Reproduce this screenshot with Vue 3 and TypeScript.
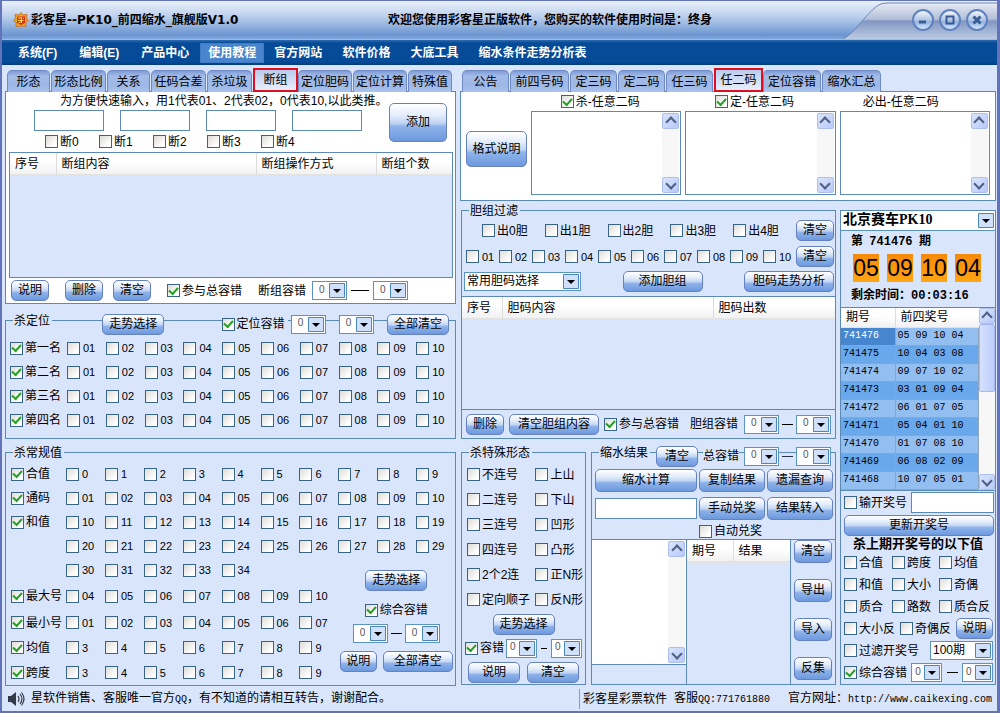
<script setup lang="ts">
import { ref } from 'vue'

interface Draw { issue: string; nums: string }
interface Row { head: string; vals: string[] }

const pad = (n: number): string => String(n).padStart(2, '0')
const range = (from: number, to: number, padded = false): string[] =>
  Array.from({ length: to - from + 1 }, (_, i) => (padded ? pad(from + i) : String(from + i)))

const menus = ['系统(F)', '编辑(E)', '产品中心', '使用教程', '官方网站', '软件价格', '大底工具', '缩水条件走势分析表']
const leftTabs = ['形态', '形态比例', '关系', '任码合差', '杀垃圾', '断组', '定位胆码', '定位计算', '特殊值']
const rightTabs = ['公告', '前四号码', '定三码', '定二码', '任三码', '任二码', '定位容错', '缩水汇总']
const leftTab = ref('断组')
const rightTab = ref('任二码')

const places = ['第一名', '第二名', '第三名', '第四名']
const tenNumbers = range(1, 10, true)

const normalRows: Row[] = [
  { head: '合值', vals: range(0, 9) },
  { head: '通码', vals: range(1, 10, true) },
  { head: '和值', vals: range(10, 19) },
  { head: '', vals: range(20, 29) },
  { head: '', vals: range(30, 34) },
  { head: '最大号', vals: range(4, 10, true) },
  { head: '最小号', vals: range(1, 7, true) },
  { head: '均值', vals: range(3, 9) },
  { head: '跨度', vals: range(3, 9) },
]

const memos = [
  { name: '杀-任意二码', box: true },
  { name: '定-任意二码', box: true },
  { name: '必出-任意二码', box: false },
]

const shapes = ['不连号', '上山', '二连号', '下山', '三连号', '凹形', '四连号', '凸形', '2个2连', '正N形', '定向顺子', '反N形']

const balls = ['05', '09', '10', '04']
const draws: Draw[] = [
  { issue: '741476', nums: '05 09 10 04' },
  { issue: '741475', nums: '10 04 03 08' },
  { issue: '741474', nums: '09 07 10 02' },
  { issue: '741473', nums: '03 01 09 04' },
  { issue: '741472', nums: '06 01 07 05' },
  { issue: '741471', nums: '05 04 01 10' },
  { issue: '741470', nums: '01 07 08 10' },
  { issue: '741469', nums: '06 08 02 09' },
  { issue: '741468', nums: '10 07 05 01' },
]
const lastKills = ['合值', '跨度', '均值', '和值', '大小', '奇偶', '质合', '路数', '质合反']
</script>

<template>
  <div class="window">
    <header class="title-bar">
      <svg class="logo" viewBox="0 0 16 16" aria-hidden="true">
        <path d="M8 .5l2 2.600 4-.8-.6 3.800 2.200 2.600-2.800 1.800.2 4-4-.6-1 .8-1-.8-4 .6.2-4L.4 8.700l2.200-2.600L2 2.300l4 .8z" fill="#f0a81c" stroke="#c8661a" stroke-width=".8" />
        <path d="M4 4.500h8v6.500l-4 2-4-2z" fill="#d8301c" />
        <path d="M5 6h3M5 8.500h5.500M8.500 5v6M5.500 11l3-1.500M10 6l1 1" stroke="#ffd84a" fill="none" />
      </svg>
      <h1>彩客星--PK10_前四缩水_旗舰版V1.0</h1>
      <p class="welcome">欢迎您使用彩客星正版软件，您购买的软件使用时间是：终身</p>
      <div class="controls">
        <svg class="wing" viewBox="0 0 154 38" preserveAspectRatio="none" aria-hidden="true">
          <defs>
            <linearGradient id="wing" x1="0" y1="0" x2="0" y2="1">
              <stop offset="0" stop-color="#e6ebf4" />
              <stop offset=".45" stop-color="#b3bfd8" />
              <stop offset=".5" stop-color="#8296c2" />
              <stop offset="1" stop-color="#bccbe4" />
            </linearGradient>
          </defs>
          <path d="M0 38C10 34 22 14 34 5Q38 2 44 2H154V38Z" fill="url(#wing)" />
          <path d="M0 38C10 34 22 14 34 5Q38 2 44 2H154" fill="none" stroke="#6f88b8" />
        </svg>
        <button class="round" aria-label="最小化">
          <svg viewBox="0 0 12 12"><path d="M2 8h7" stroke="#3a5c94" stroke-width="3" /></svg>
        </button>
        <button class="round" aria-label="最大化">
          <svg viewBox="0 0 12 12"><path d="M2.500 2.500h7v7h-7z" fill="none" stroke="#3a5c94" stroke-width="2" /></svg>
        </button>
        <button class="round" aria-label="关闭">
          <svg viewBox="0 0 12 12"><path d="M2.500 2.500l7 7M9.500 2.500l-7 7" stroke="#3a5c94" stroke-width="3" /></svg>
        </button>
      </div>
    </header>

    <nav class="menu-bar">
      <a v-for="m in menus" :key="m" href="#" :class="{ on: m === '使用教程' }">{{ m }}</a>
    </nav>

    <main class="work">
      <div class="left">
        <div class="tabs tabs-left">
          <button v-for="t in leftTabs" :key="t" :class="{ on: t === leftTab }" @click="leftTab = t">{{ t }}</button>
        </div>
        <section class="page break-page">
          <div class="quick">
            <div class="quick-main">
              <p>为方便快速输入，用1代表01、2代表02，0代表10,以此类推。</p>
              <div class="quick-inputs">
                <input v-for="n in 4" :key="n" type="text" class="field" :aria-label="'断组输入' + n">
              </div>
              <div class="quick-checks">
                <label v-for="n in range(0, 4)" :key="n" class="ck"><input type="checkbox">断{{ n }}</label>
              </div>
            </div>
            <button class="btn btn-add">添加</button>
          </div>
          <div class="list break-list">
            <table>
              <colgroup><col class="w46"><col><col class="w120"><col class="w76"></colgroup>
              <thead><tr><th>序号</th><th>断组内容</th><th>断组操作方式</th><th>断组个数</th></tr></thead>
            </table>
          </div>
          <div class="break-foot">
            <button class="btn">说明</button>
            <button class="btn">删除</button>
            <button class="btn">清空</button>
            <label class="ck"><input type="checkbox" checked>参与总容错</label>
            <div class="pair">
              <span class="pair-name">断组容错</span>
              <select aria-label="断组容错下限"><option>0</option><option>1</option></select>
              <i class="dash"></i>
              <select aria-label="断组容错上限"><option>0</option><option>1</option></select>
            </div>
          </div>
        </section>

        <section class="group place-group">
          <div class="head place-head">
            <h2>杀定位</h2>
            <button class="btn">走势选择</button>
            <label class="ck"><input type="checkbox" checked>定位容错</label>
            <select aria-label="定位容错下限"><option>0</option><option>1</option></select>
            <select aria-label="定位容错上限"><option>0</option><option>1</option></select>
            <button class="btn">全部清空</button>
          </div>
          <div class="numbers place-rows">
            <template v-for="p in places" :key="p">
              <label class="ck row-head"><input type="checkbox" checked>{{ p }}</label>
              <label v-for="n in tenNumbers" :key="p + n" class="ck num"><input type="checkbox">{{ n }}</label>
            </template>
          </div>
        </section>

        <section class="group normal-group">
          <div class="head"><h2>杀常规值</h2></div>
          <div class="numbers normal-rows">
            <template v-for="(r, i) in normalRows" :key="i">
              <label v-if="r.head" class="ck row-head"><input type="checkbox" checked>{{ r.head }}</label>
              <span v-else class="row-head"></span>
              <label v-for="n in r.vals" :key="n" class="ck num"><input type="checkbox">{{ n }}</label>
            </template>
            <div class="normal-side">
              <button class="btn trend">走势选择</button>
              <label class="ck"><input type="checkbox" checked>综合容错</label>
              <div class="pair">
                <select aria-label="综合容错下限"><option>0</option><option>1</option></select>
                <i class="dash short"></i>
                <select aria-label="综合容错上限"><option>0</option><option>1</option></select>
              </div>
              <div class="side-buttons">
                <button class="btn">说明</button>
                <button class="btn wide">全部清空</button>
              </div>
            </div>
          </div>
        </section>
      </div>

      <div class="right">
        <div class="tabs tabs-right">
          <button v-for="t in rightTabs" :key="t" :class="{ on: t === rightTab }" @click="rightTab = t">{{ t }}</button>
        </div>
        <section class="page two-page">
          <button class="btn btn-format">格式说明</button>
          <div v-for="m in memos" :key="m.name" class="memo-col">
            <label v-if="m.box" class="ck"><input type="checkbox" checked>{{ m.name }}</label>
            <span v-else class="memo-name">{{ m.name }}</span>
            <div class="memo">
              <textarea :aria-label="m.name"></textarea>
              <div class="scroll">
                <button class="sb up" aria-label="向上"></button>
                <button class="sb down" aria-label="向下"></button>
              </div>
            </div>
          </div>
        </section>

        <div class="lower">
          <div class="middle">
            <section class="group dan-group">
              <div class="head dan-head"><h2>胆组过滤</h2></div>
              <div class="dan-row dan-out">
                <div class="dan-checks five">
                  <label v-for="n in range(0, 4)" :key="n" class="ck"><input type="checkbox">出{{ n }}胆</label>
                </div>
                <button class="btn">清空</button>
              </div>
              <div class="dan-row">
                <div class="dan-checks ten">
                  <label v-for="n in tenNumbers" :key="n" class="ck num"><input type="checkbox">{{ n }}</label>
                </div>
                <button class="btn">清空</button>
              </div>
              <div class="dan-tools">
                <select class="dan-select" aria-label="常用胆码选择"><option>常用胆码选择</option></select>
                <button class="btn">添加胆组</button>
                <button class="btn analyse">胆码走势分析</button>
              </div>
              <div class="list dan-list">
                <table>
                  <colgroup><col class="w40"><col><col class="w122"></colgroup>
                  <thead><tr><th>序号</th><th>胆码内容</th><th>胆码出数</th></tr></thead>
                </table>
              </div>
              <div class="dan-foot">
                <button class="btn">删除</button>
                <button class="btn clear-dan">清空胆组内容</button>
                <label class="ck"><input type="checkbox" checked>参与总容错</label>
                <div class="pair">
                  <span class="pair-name">胆组容错</span>
                  <select aria-label="胆组容错下限"><option>0</option><option>1</option></select>
                  <i class="dash short"></i>
                  <select aria-label="胆组容错上限"><option>0</option><option>1</option></select>
                </div>
              </div>
            </section>

            <div class="bottom">
              <section class="group shape-group">
                <div class="head"><h2>杀特殊形态</h2></div>
                <div class="shape-checks">
                  <label v-for="s in shapes" :key="s" class="ck"><input type="checkbox">{{ s }}</label>
                </div>
                <div class="shape-line"><button class="btn trend">走势选择</button></div>
                <div class="shape-line">
                  <label class="ck"><input type="checkbox" checked>容错</label>
                  <select class="slim" aria-label="形态容错下限"><option>0</option><option>1</option></select>
                  <i class="dash tiny"></i>
                  <select class="slim" aria-label="形态容错上限"><option>0</option><option>1</option></select>
                </div>
                <div class="shape-line shape-buttons">
                  <button class="btn">说明</button>
                  <button class="btn">清空</button>
                </div>
              </section>

              <section class="group result-group">
                <div class="head result-head">
                  <h2>缩水结果</h2>
                  <button class="btn">清空</button>
                  <span class="total">总容错</span>
                  <select aria-label="总容错下限"><option>0</option><option>1</option></select>
                  <i class="dash short"></i>
                  <select aria-label="总容错上限"><option>0</option><option>1</option></select>
                </div>
                <div class="result-grid">
                  <button class="btn">缩水计算</button>
                  <button class="btn">复制结果</button>
                  <button class="btn">遗漏查询</button>
                  <input type="text" class="field" aria-label="兑奖号码">
                  <button class="btn">手动兑奖</button>
                  <button class="btn">结果转入</button>
                  <label class="ck auto"><input type="checkbox">自动兑奖</label>
                </div>
                <div class="result-body">
                  <div class="result-text">
                    <div class="memo">
                      <textarea aria-label="缩水结果"></textarea>
                      <div class="scroll">
                        <button class="sb up" aria-label="向上"></button>
                        <button class="sb down" aria-label="向下"></button>
                      </div>
                    </div>
                  </div>
                  <div class="result-list">
                    <table>
                      <colgroup><col class="w46"><col></colgroup>
                      <thead><tr><th>期号</th><th>结果</th></tr></thead>
                    </table>
                  </div>
                  <div class="result-actions">
                    <button class="btn">清空</button>
                    <button class="btn">导出</button>
                    <button class="btn">导入</button>
                    <button class="btn">反集</button>
                  </div>
                </div>
              </section>
            </div>
          </div>

          <aside class="lottery">
            <select class="game" aria-label="彩种"><option>北京赛车PK10</option></select>
            <p class="issue">第 <span>741476</span> 期</p>
            <div class="balls"><b v-for="b in balls" :key="b">{{ b }}</b></div>
            <p class="remain">剩余时间：<span>00:03:16</span></p>
            <div class="history">
              <table>
                <colgroup><col class="w54"><col></colgroup>
                <thead><tr><th>期号</th><th>前四奖号</th></tr></thead>
                <tbody>
                  <tr v-for="d in draws" :key="d.issue"><td>{{ d.issue }}</td><td>{{ d.nums }}</td></tr>
                </tbody>
              </table>
              <div class="scroll full">
                <button class="sb up" aria-label="向上"></button>
                <div class="thumb"></div>
                <button class="sb down" aria-label="向下"></button>
              </div>
            </div>
            <div class="open-row">
              <label class="ck"><input type="checkbox">输开奖号</label>
              <input type="text" class="field" aria-label="开奖号">
            </div>
            <button class="btn refresh">更新开奖号</button>
            <h3>杀上期开奖号的以下值</h3>
            <div class="kill-checks">
              <label v-for="k in lastKills" :key="k" class="ck"><input type="checkbox">{{ k }}</label>
            </div>
            <div class="kill-line">
              <label class="ck"><input type="checkbox">大小反</label>
              <label class="ck"><input type="checkbox">奇偶反</label>
              <button class="btn">说明</button>
            </div>
            <div class="kill-line">
              <label class="ck"><input type="checkbox">过滤开奖号</label>
              <select class="periods" aria-label="期数"><option>100期</option></select>
            </div>
            <div class="kill-line">
              <label class="ck"><input type="checkbox" checked>综合容错</label>
              <select class="slim" aria-label="上期容错下限"><option>0</option><option>1</option></select>
              <i class="dash short"></i>
              <select class="slim" aria-label="上期容错上限"><option>0</option><option>1</option></select>
            </div>
          </aside>
        </div>
      </div>
    </main>

    <footer class="status">
      <div class="notice">
        <svg viewBox="0 0 18 16" aria-hidden="true">
          <path d="M1 5h3l5-4v14l-5-4H1z" fill="#333b46" />
          <path d="M11 5q2 3 0 6M13 3q4 5 0 10M14.500 1.500q5 6.500 0 13" fill="none" stroke="#333b46" stroke-width="1.200" />
        </svg>
        <span>星软件销售、客服唯一官方<span class="mono">QQ</span>，有不知道的请相互转告，谢谢配合。</span>
      </div>
      <div class="contact">
        <span>彩客星彩票软件</span>
        <span>客服<span class="mono">QQ:771761880</span></span>
        <span class="site">官方网址：<a class="mono" href="http://www.caikexing.com">http://www.caikexing.com</a></span>
      </div>
    </footer>
  </div>
</template>

<style>
body {
  background: #d9e5fb;
}
</style>

<style scoped>
.window,
.window * {
  box-sizing: border-box;
}
.window {
  border: solid #6373ba;
  border-width: 1px 3px 2px 2px;
  background: #d9e5fb;
  color: #000;
  font: 12px/16px "Liberation Sans", "Noto Sans CJK SC", sans-serif;
  white-space: nowrap;
}
h1, h2, h3, p {
  margin: 0;
  font-size: 12px;
}
button, input, select, textarea {
  margin: 0;
  font: inherit;
  color: inherit;
}
.mono {
  font: 10px/16px "Liberation Mono", monospace;
}

/* title bar */
.title-bar {
  display: flex;
  align-items: center;
  height: 38px;
  padding-left: 11px;
  background: linear-gradient(#e9f0fa 0, #c3d5ef 35%, #9cb9e2 60%, #6a94d0 90%, #82a8db 100%);
}
.logo {
  width: 16px;
  height: 16px;
  margin-right: 2px;
}
.title-bar h1,
.welcome {
  font-weight: bold;
}
.title-bar h1 {
  flex: 0 1 357px;
  font-family: "DejaVu Sans", "Noto Sans CJK SC", sans-serif;
}
.welcome {
  flex: 1;
}
.controls {
  position: relative;
  display: flex;
  align-items: center;
  justify-content: flex-end;
  gap: 5px;
  width: 154px;
  height: 38px;
  padding-right: 9px;
}
.wing {
  position: absolute;
  inset: 0;
  width: 100%;
  height: 100%;
}
.round {
  position: relative;
  display: grid;
  place-items: center;
  width: 22px;
  height: 22px;
  padding: 0;
  border: 2px solid #5f82bf;
  border-radius: 50%;
  background: linear-gradient(#f2f6fc, #a9c0e4 55%, #8fb0e0 60%, #d8e8fb);
}
.round svg {
  width: 12px;
  height: 12px;
}

/* menu */
.menu-bar {
  display: flex;
  align-items: stretch;
  height: 26px;
  padding: 3px 5px 2px;
  border-top: 1px solid #9cbce4;
  background: linear-gradient(#2f6cb0 0, #064b97 12%, #064b97 88%, #023a7c 100%);
}
.menu-bar a {
  padding: 0 10px;
  border: 1px solid transparent;
  color: #fff;
  font-weight: bold;
  line-height: 19px;
  text-decoration: none;
}
.menu-bar a:nth-child(n+5) {
  padding: 0 9px;
}
.menu-bar .on {
  padding: 0 7px;
  border-color: #3f7cc8;
  background: #4a84cc;
}

/* frame of the work area */
.work {
  display: grid;
  grid-template-columns: minmax(0, 451fr) minmax(0, 536fr);
  gap: 4px;
  padding: 5px 1px 0 3px;
}
.tabs {
  display: grid;
  height: 21px;
  padding-left: 2px;
}
.tabs-left {
  grid-template-columns: 44px 56px 44px 56px 46px 45px 55px 55px 45px;
}
.tabs-right {
  grid-template-columns: 48px 60px 48px 48px 48px 49px 59px 60px;
}
.tabs button {
  margin-right: 1px;
  padding: 0;
  border: 1px solid #6e8ac6;
  border-bottom: 0;
  border-radius: 5px 5px 0 0;
  background: linear-gradient(#7f9cd6 0, #a3bce8 25%, #9db8e6 70%, #abc4ee 100%);
  line-height: 18px;
}
.tabs .on {
  height: 24px;
  margin: -2px 0 0;
  border: 2px solid #dd1020;
  border-radius: 0;
  background: linear-gradient(#b9cbee, #e8effc);
  line-height: 20px;
}
.page {
  border: 1px solid #5b8ab6;
  background: #fff;
}
.group {
  border: 1px solid #5b8ab6;
}
.head {
  display: flex;
  height: 18px;
  margin-top: -9px;
  padding-left: 7px;
}
.head h2 {
  align-self: flex-start;
  justify-self: start;
  padding: 0 2px 0 1px;
  background: #d9e5fb;
  font-weight: normal;
  line-height: 18px;
}

/* controls */
.btn {
  height: 21px;
  padding: 0;
  border: 1px solid #6681c2;
  border-radius: 5px;
  background: linear-gradient(#fff 0, #e4edfb 30%, #c0d4f4 52%, #8fb3ea 60%, #6c99de 100%);
  line-height: 17px;
  text-align: center;
}
.ck {
  display: inline-flex;
  align-items: center;
  gap: 2px;
}
.ck input {
  appearance: none;
  display: grid;
  place-items: center;
  flex: none;
  width: 13px;
  height: 13px;
  border: 1px solid #3a6486;
  background: linear-gradient(135deg, #dedcd6, #fff 80%);
}
.ck input:checked::after {
  content: "";
  width: 7px;
  height: 4px;
  margin-top: -2px;
  border: solid #21a121;
  border-width: 0 0 2px 2px;
  transform: rotate(-48deg);
}
.num {
  gap: 3px;
  font-size: 11px;
}
.field {
  height: 21px;
  min-width: 0;
  padding: 0 2px;
  border: 1px solid #5b8ab6;
  background: #fff;
}
select {
  appearance: none;
  width: 35px;
  height: 19px;
  padding: 0 0 2px 6px;
  border: 1px solid #5b94bf;
  border-radius: 0;
  background: #fff url("data:image/svg+xml,%3Csvg xmlns='http://www.w3.org/2000/svg' width='16' height='15'%3E%3Cpath d='M.5.5h15v14H.5z' fill='%23cfe0f8' stroke='%234a86b8'/%3E%3Cpath d='M4 6h8l-4 4z'/%3E%3C/svg%3E") no-repeat right 1px center;
  color: #555;
  font-size: 10px;
  line-height: 14px;
}
select.slim {
  width: 31px;
  padding-left: 3px;
}
.pair {
  display: flex;
  align-items: center;
}
.dash {
  flex: none;
  width: 18px;
  height: 1px;
  margin: 0 4px;
  background: #000;
}
.dash.short {
  width: 11px;
  margin: 0 3px;
}
.dash.tiny {
  width: 6px;
  margin: 0 4px;
}
.list {
  border: 1px solid #5b8ab6;
  background: #d9e5fb;
}
table {
  width: 100%;
  border-collapse: collapse;
  table-layout: fixed;
}
th {
  height: 22px;
  padding: 0 0 0 5px;
  border-right: 1px solid #dcdcd8;
  border-bottom: 2px solid #e3e4e2;
  background: linear-gradient(#fff 40%, #f1f1f1);
  font-weight: normal;
  text-align: left;
}
th:last-child {
  border-right: 0;
}
.w40 { width: 40px; }
.w46 { width: 46px; }
.w54 { width: 54px; }
.w76 { width: 76px; }
.w120 { width: 120px; }
.w122 { width: 122px; }

.memo {
  display: flex;
  border: 1px solid #5b8ab6;
  background: #fff;
}
.memo textarea {
  flex: 1;
  width: 0;
  min-width: 0;
  height: auto;
  padding: 2px;
  border: 0;
  background: #fff;
  resize: none;
}
.scroll {
  display: flex;
  flex: none;
  flex-direction: column;
  justify-content: space-between;
  width: 17px;
  margin: 1px;
  background: #f7f7f7;
}
.sb {
  display: grid;
  place-items: center;
  height: 16px;
  padding: 0;
  border: 1px solid #aebfee;
  border-radius: 2px;
  background: linear-gradient(135deg, #dbe5fe, #b6c9f8);
}
.sb::after {
  content: "";
  width: 6px;
  height: 6px;
  border: solid #4d6185;
  border-width: 2px 0 0 2px;
  transform: translateY(1px) rotate(45deg);
}
.sb.down::after {
  transform: translateY(-1px) rotate(225deg);
}

/* break groups */
.break-page {
  padding: 0 2px 0 3px;
}
.quick {
  display: flex;
  height: 60px;
}
.quick-main {
  flex: 1;
}
.quick p {
  padding-left: 51px;
  line-height: 18px;
}
.quick-inputs {
  display: flex;
  gap: 16px;
  padding-left: 25px;
}
.quick-inputs .field {
  width: 70px;
}
.quick-checks {
  display: grid;
  grid-template-columns: repeat(5, 54px);
  height: 21px;
  padding-left: 36px;
}
.btn-add {
  width: 58px;
  height: 39px;
  margin: 11px 6px 0 0;
}
.break-list {
  height: 126px;
}
.break-foot {
  display: flex;
  align-items: center;
  gap: 10px;
  height: 25px;
  padding-left: 2px;
}
.break-foot .btn {
  width: 38px;
}
.break-foot .btn:first-child {
  margin-right: 6px;
}
.break-foot .ck {
  margin: 0 6px;
}
.pair-name {
  margin-right: 6px;
}

/* place group */
.place-group {
  margin-top: 16px;
  padding-bottom: 6px;
}
.place-head {
  display: grid;
  grid-template-columns: 89fr 119fr 69fr 48fr 48fr 61fr;
  align-items: center;
  height: 24px;
  padding: 0 6px 0 7px;
}
.place-head .btn {
  width: 62px;
}
.place-head .ck {
  justify-self: start;
  padding-right: 3px;
  background: #d9e5fb;
}
.numbers {
  display: grid;
}
.row-head {
  grid-column: 1;
}
.place-rows {
  grid-template-columns: 57px repeat(10, 1fr);
  grid-auto-rows: 24px;
  padding-left: 4px;
}

/* ordinary values */
.normal-group {
  margin-top: 13px;
}
.normal-rows {
  grid-template-columns: 55px repeat(10, 1fr);
  grid-template-rows: repeat(5, 24px) 28px repeat(3, 25px);
  padding-left: 5px;
}
.normal-side {
  grid-area: 5 / 9 / 10 / -1;
  display: flex;
  flex-direction: column;
  align-items: center;
  width: 116px;
  padding-top: 12px;
}
.normal-side .ck {
  height: 20px;
  margin: 9px 0 4px;
}
.side-buttons {
  display: flex;
  gap: 6px;
  margin-top: 8px;
}
.side-buttons .btn {
  width: 37px;
}
.side-buttons .wide {
  width: 70px;
}
.trend {
  width: 62px;
}

/* any-two page */
.two-page {
  display: grid;
  grid-template-columns: 61px repeat(3, minmax(0, 1fr));
  column-gap: 4px;
  height: 110px;
  padding: 0 5px 5px;
}
.btn-format {
  height: 36px;
  margin-top: 39px;
}
.memo-col {
  display: flex;
  flex-direction: column;
  align-items: center;
}
.memo-col .ck,
.memo-name {
  height: 19px;
  padding-right: 12px;
  line-height: 20px;
}
.memo-name {
  padding-right: 28px;
}
.memo-col .memo {
  flex: 1;
  width: 100%;
}

/* lower right */
.lower {
  display: grid;
  grid-template-columns: minmax(0, 375fr) minmax(0, 156fr);
  gap: 4px;
  margin-top: 9px;
  padding-left: 1px;
}
.dan-head {
  height: 16px;
}
.dan-row {
  display: flex;
  align-items: center;
  height: 27px;
  padding: 0 1px 0 4px;
}
.dan-row.dan-out {
  height: 25px;
}
.dan-row .btn {
  width: 38px;
}
.dan-checks {
  display: grid;
  flex: 1;
}
.five {
  grid-template-columns: repeat(5, 1fr);
  padding-left: 16px;
}
.ten {
  grid-template-columns: repeat(10, 1fr);
}
.dan-tools {
  display: flex;
  align-items: center;
  justify-content: space-between;
  height: 26px;
  padding: 0 1px 3px 2px;
}
.dan-select {
  width: 117px;
  padding-left: 2px;
  color: #000;
  font-size: 12px;
}
.dan-tools .btn {
  width: 80px;
}
.dan-tools .analyse {
  width: 90px;
}
.dan-list {
  height: 114px;
  border-width: 1px 0;
}
.dan-foot {
  display: flex;
  align-items: center;
  gap: 5px;
  height: 28px;
  padding-left: 4px;
}
.dan-foot .btn {
  width: 38px;
}
.dan-foot .clear-dan {
  width: 90px;
}
.dan-foot .pair {
  margin-left: 6px;
}
.bottom {
  display: grid;
  grid-template-columns: minmax(0, 125fr) minmax(0, 245fr);
  gap: 5px;
  margin-top: 13px;
}
.shape-checks {
  display: grid;
  grid-template-columns: 69fr 50fr;
  grid-auto-rows: 25px;
  padding-left: 5px;
}
.shape-line {
  display: flex;
  align-items: center;
  justify-content: center;
  height: 24px;
}
.shape-line .ck {
  margin-right: 2px;
}
.shape-buttons {
  gap: 7px;
}
.shape-buttons .btn {
  flex: 0 1 52px;
}
.result-group {
  display: flex;
  flex-direction: column;
}
.result-head {
  align-items: center;
  height: 24px;
}
.result-head .btn {
  width: 42px;
  margin: 0 5px 0 6px;
}
.result-head .total {
  margin-right: 5px;
  background: #d9e5fb;
}
.result-head .dash {
  background: #234;
}
.result-grid {
  display: grid;
  grid-template-columns: 102fr 66fr 66fr;
  grid-template-rows: 25px 30px 16px;
  column-gap: 2px;
  align-items: center;
  padding: 0 2px 0 3px;
}
.result-grid .btn {
  height: 23px;
}
.auto {
  grid-column: 2 / -1;
}
.result-body {
  display: grid;
  grid-template-columns: 95px 1fr 44px;
  flex: 1;
  border-top: 1px solid #5b8ab6;
}
.result-text {
  display: flex;
  flex-direction: column;
  padding-bottom: 19px;
  border-right: 1px solid #5b8ab6;
}
.result-text .memo {
  flex: 1;
  border-width: 0 0 1px;
}
.result-list {
  border-right: 1px solid #5b8ab6;
}
.result-actions {
  display: flex;
  flex-direction: column;
  align-items: center;
  justify-content: space-between;
  padding-bottom: 4px;
}
.result-actions .btn {
  width: 38px;
  height: 23px;
}

/* lottery panel */
.lottery {
  display: flex;
  flex-direction: column;
  border: 1px solid #5b8ab6;
}
.game {
  width: 100%;
  height: 20px;
  padding-left: 2px;
  border-width: 0 0 1px;
  color: #000;
  font: bold 14px/18px "Liberation Serif", "Noto Sans CJK SC", serif;
}
.issue,
.remain {
  padding-left: 10px;
  font-weight: bold;
  line-height: 20px;
}
.issue span,
.remain span {
  font-family: "Liberation Mono", monospace;
}
.issue span {
  margin: 0 3px;
}
.balls {
  display: flex;
  gap: 8px;
  padding: 2px 0 2px 12px;
}
.balls b {
  width: 26px;
  height: 28px;
  background: linear-gradient(#f58a08, #ffa514);
  font: 23px/29px "Liberation Sans", sans-serif;
  text-align: center;
}
.remain {
  line-height: 22px;
}
.history {
  display: flex;
  border: solid #5b8ab6;
  border-width: 1px 0;
}
.history table {
  flex: 1;
  width: 0;
}
.history th {
  height: 19px;
  border-bottom-width: 1px;
}
.history td {
  height: 18px;
  padding: 0 0 0 2px;
  border: solid #8fa5bd;
  border-width: 0 1px 1px 0;
  background: #93bff0;
  font: 10px/16px "Liberation Mono", monospace;
}
.history tr:nth-child(even) td {
  background: #69a8ea;
}
.history tbody tr:first-child td:first-child {
  background: #4686cf;
  color: #fff;
}
.scroll.full {
  justify-content: flex-start;
  width: 16px;
  margin: 0;
}
.thumb {
  height: 68px;
  border: 1px solid #a6b8ea;
  border-radius: 2px;
  background: linear-gradient(90deg, #d6e1fd, #bccdf9);
}
.full .down {
  margin-top: auto;
}
.open-row {
  display: flex;
  align-items: center;
  gap: 4px;
  height: 24px;
  padding: 0 1px 0 3px;
}
.open-row .field {
  flex: 1;
  width: 0;
}
.refresh {
  margin: 0 1px 0 3px;
}
.lottery h3 {
  font-size: 13px;
  line-height: 16px;
  text-align: center;
}
.kill-checks {
  display: grid;
  grid-template-columns: 48fr 47fr 56fr;
  grid-auto-rows: 22px;
  padding-left: 3px;
}
.kill-line {
  display: flex;
  align-items: center;
  justify-content: space-between;
  height: 22px;
  padding: 0 2px 0 3px;
}
.kill-line .btn {
  width: 37px;
}
.kill-line .dash {
  margin: 0;
}
.periods {
  width: 63px;
  padding-left: 2px;
  color: #000;
  font-size: 12px;
}

/* status */
.status {
  display: grid;
  grid-template-columns: minmax(0, 577fr) minmax(0, 418fr);
  align-items: center;
  height: 25px;
}
.notice,
.contact {
  display: flex;
  align-items: center;
}
.notice {
  gap: 6px;
  padding-left: 5px;
}
.notice svg {
  width: 18px;
  height: 16px;
}
.contact {
  gap: 7px;
  height: 20px;
  padding: 0 5px 0 3px;
  border-left: 1px solid #8a9bb8;
}
.site {
  margin-left: auto;
}
.site a {
  color: #000;
  text-decoration: none;
}
</style>
